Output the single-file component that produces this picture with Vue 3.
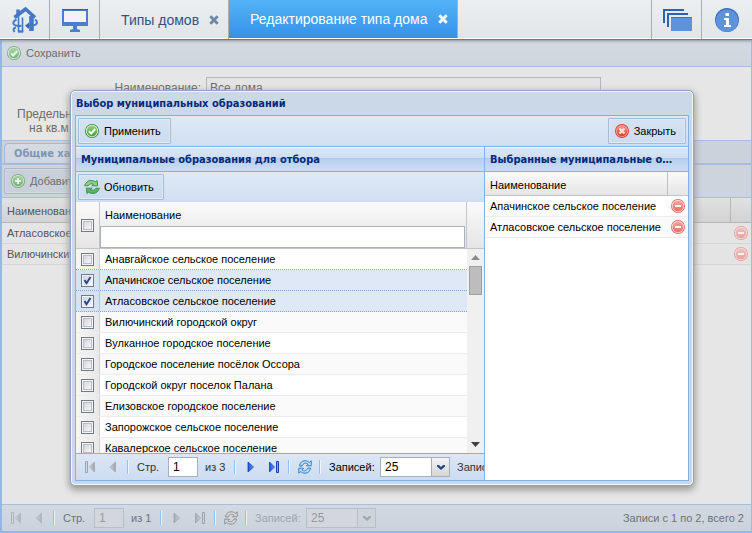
<script setup>
import { ref } from 'vue'

const municipalities = ref([
  { name: 'Анавгайское сельское поселение', checked: false },
  { name: 'Апачинское сельское поселение', checked: true },
  { name: 'Атласовское сельское поселение', checked: true },
  { name: 'Вилючинский городской округ', checked: false },
  { name: 'Вулканное городское поселение', checked: false },
  { name: 'Городское поселение посёлок Оссора', checked: false },
  { name: 'Городской округ поселок Палана', checked: false },
  { name: 'Елизовское городское поселение', checked: false },
  { name: 'Запорожское сельское поселение', checked: false },
  { name: 'Кавалерское сельское поселение', checked: false },
])
const selected = ['Апачинское сельское поселение', 'Атласовское сельское поселение']
const pageRows = ['Атласовское сельское поселение', 'Вилючинский городской округ']
</script>

<template>
  <div class="app">
    <svg class="defs" aria-hidden="true">
      <defs>
        <linearGradient id="gGreen" x1="0" y1="0" x2="0" y2="1"><stop offset="0" stop-color="#8fd07c" /><stop offset="1" stop-color="#3da233" /></linearGradient>
        <linearGradient id="gRed" x1="0" y1="0" x2="0" y2="1"><stop offset="0" stop-color="#f59a8b" /><stop offset="1" stop-color="#dd3a2b" /></linearGradient>
        <linearGradient id="gPink" x1="0" y1="0" x2="0" y2="1"><stop offset="0" stop-color="#f6a49e" /><stop offset="1" stop-color="#ea7169" /></linearGradient>
        <linearGradient id="gBlue" x1="0" y1="0" x2="1" y2="0"><stop offset="0" stop-color="#1c50cf" /><stop offset="1" stop-color="#5aa2f8" /></linearGradient>
        <linearGradient id="gGray" x1="0" y1="0" x2="1" y2="0"><stop offset="0" stop-color="#d5d8dc" /><stop offset="1" stop-color="#999ea6" /></linearGradient>
      </defs>
      <symbol id="ok" viewBox="0 0 16 16">
        <circle cx="8" cy="8" r="7" fill="#2f8a2c" /><circle cx="8" cy="8" r="6.2" fill="#d6efcf" /><circle cx="8" cy="8" r="5.2" fill="url(#gGreen)" />
        <path d="M5 8.2l2.200 2.300L11.200 6" fill="none" stroke="#fff" stroke-width="2" />
      </symbol>
      <symbol id="plus" viewBox="0 0 16 16">
        <circle cx="8" cy="8" r="7" fill="#2f8a2c" /><circle cx="8" cy="8" r="6.2" fill="#d6efcf" /><circle cx="8" cy="8" r="5.2" fill="url(#gGreen)" />
        <path d="M8 5v6M5 8h6" fill="none" stroke="#fff" stroke-width="2" />
      </symbol>
      <symbol id="cancel" viewBox="0 0 16 16">
        <circle cx="8" cy="8" r="7" fill="#cf4636" /><circle cx="8" cy="8" r="6.1" fill="#f3a79b" /><circle cx="8" cy="8" r="5.3" fill="url(#gRed)" />
        <path d="M5.500 5.500l5 5M10.500 5.500l-5 5" fill="none" stroke="#fde4e0" stroke-width="2.200" />
      </symbol>
      <symbol id="minus" viewBox="0 0 16 16">
        <circle cx="8" cy="8" r="7" fill="#e0645c" /><circle cx="8" cy="8" r="6.2" fill="#fbd5d2" /><circle cx="8" cy="8" r="5.3" fill="url(#gPink)" />
        <path d="M5 8h6" stroke="#fff" stroke-width="2" />
      </symbol>
      <symbol id="reload" viewBox="0 0 16 16">
        <g stroke="#3b8a45" stroke-width=".9" stroke-linejoin="round">
          <path d="M.6 6.800C1.500 3.500 4 1.500 7 1.500c1.900 0 3.300.5 4.300 1.300l1.800-1.300.6 5.300H7.800l1.600-1.500C7.600 4.300 5.600 4.600 4.200 6.800z" fill="#8fce8e" />
          <path d="M15.400 9.200c-.9 3.300-3.400 5.300-6.400 5.300-1.900 0-3.300-.5-4.300-1.300l-1.800 1.300-.6-5.300h5.900l-1.600 1.500c1.800 1 3.800.7 5.200-1.500z" fill="#5fb469" />
        </g>
      </symbol>
      <symbol id="first" viewBox="0 0 16 16"><path d="M3.500 2.500h2v11h-2z" fill="#d5d8dc" stroke="#9ea5ae" /><path d="M12.500 3v10L7.500 8z" fill="url(#gGray)" stroke="#a4aab3" stroke-width=".8" /></symbol>
      <symbol id="prev" viewBox="0 0 16 16"><path d="M10.500 3v10L5 8z" fill="url(#gGray)" stroke="#a4aab3" stroke-width=".8" /></symbol>
      <symbol id="next" viewBox="0 0 16 16"><path d="M5 3v10L10.500 8z" fill="url(#gBlue)" stroke="#1740b4" stroke-width=".8" /></symbol>
      <symbol id="last" viewBox="0 0 16 16"><path d="M3.500 3v10L8.500 8z" fill="url(#gBlue)" stroke="#1740b4" stroke-width=".8" /><path d="M10.500 2.500h2v11h-2z" fill="#6ca9f4" stroke="#1740b4" /></symbol>
      <symbol id="refresh" viewBox="0 0 16 16">
        <g fill="#bfe2fb" stroke="#2a7fc8" stroke-width="1" stroke-linejoin="round">
          <path d="M2.500 7C2.800 3.800 5 1.800 8 1.800c1.900 0 3.200.6 4.200 1.700l2-1.700v5H9.500l1.600-1.700C9 3.500 6.200 4 5 7z" />
          <path d="M13.500 9c-.3 3.200-2.500 5.200-5.500 5.200-1.900 0-3.200-.6-4.200-1.700l-2 1.700v-5h4.700l-1.600 1.700C7 12.500 9.800 12 11 9z" />
        </g>
      </symbol>
      <symbol id="x" viewBox="0 0 10 10"><path d="M1.300 1.300l7.400 7.400M8.700 1.300L1.300 8.700" stroke="currentColor" stroke-width="2.800" /></symbol>
    </svg>

    <header class="topbar">
      <button class="tile" aria-label="Главная">
        <svg width="28" height="28" viewBox="0 0 28 28">
          <g fill="none" stroke="#4577c4">
            <path d="M3.500 11.500L14.500 3 24 11.500" stroke-width="3.600" />
            <path d="M7 3.500v5" stroke-width="3.400" />
            <path d="M7.500 10v15.500M11.500 11.500V26" stroke-width="1.600" />
            <path d="M7 25.500h5.300" stroke-width="2.400" />
            <path d="M20.500 10v15" stroke-width="4.600" />
            <path d="M5.500 13.500C2 15 1.500 17.500 3.500 19c1.500 1 4 1 7 .8M3.500 26C1.800 23.500 2.500 21.800 5 21.500" stroke-width="2" />
            <path d="M24 13.500c2.500 1.500 2.500 4 .5 5.200-2 1-4.500 1-8.500.8" stroke-width="2" />
          </g>
          <path d="M18 16.500v6.500l-4-3.200z" fill="#3566b0" />
        </svg>
      </button>
      <button class="tile" aria-label="Рабочий стол">
        <svg width="28" height="28" viewBox="0 0 28 28">
          <path d="M1 3h26v17H1z" fill="#4a7fcb" /><path d="M1 3h26v1H1z" fill="#2f5ea8" />
          <path d="M3 5h22v11H3z" fill="#f0f4f8" />
          <path d="M12 20h4v3l3 1v2H9v-2l3-1z" fill="#4a7fcb" />
        </svg>
      </button>
      <nav class="tabs">
        <a class="tab" href="#types">Типы домов <svg class="close" width="10" height="10"><use href="#x" /></svg></a>
        <a class="tab active" href="#edit">Редактирование типа дома <svg class="close" width="10" height="10"><use href="#x" /></svg></a>
      </nav>
      <button class="tile right" aria-label="Окна">
        <svg width="30" height="24" viewBox="0 0 30 24">
          <path d="M1 15V1h21v2H3v12z" fill="#2c62b6" /><path d="M5 19V5h21v2H7v12z" fill="#2c62b6" /><path d="M9 9h21v14H9z" fill="#5c93da" /><path d="M9 9h21v1H9z" fill="#3f74c2" />
        </svg>
      </button>
      <button class="tile right" aria-label="Информация">
        <svg width="26" height="26" viewBox="0 0 26 26">
          <circle cx="13" cy="13" r="12" fill="#3b6fc0" /><circle cx="13" cy="13.600" r="11.200" fill="#5c93da" />
          <path d="M11.500 6h3.500v3h-3.500zM10 11h5v7h2v2h-7v-2h2v-5h-2z" fill="#fff" />
        </svg>
      </button>
    </header>

    <main class="page">
      <div class="bar save-bar">
        <button class="plain"><svg class="dim" width="16" height="16"><use href="#ok" /></svg>Сохранить</button>
      </div>
      <form class="form" @submit.prevent>
        <label class="form-label" for="house-name">Наименование:</label>
        <input id="house-name" class="form-input" value="Все дома" />
        <label class="form-label wide" for="house-limit">Предельная стоимость<br /><span class="second">на кв.м, руб.:</span></label>
        <input id="house-limit" class="form-input" />
      </form>
      <div class="strip"><button class="strip-tab">Общие характеристики</button></div>
      <div class="bar add-bar">
        <button class="btn muted"><svg class="dim" width="16" height="16"><use href="#plus" /></svg>Добавить</button>
      </div>
      <table class="grid back-grid">
        <thead><tr><th>Наименование</th><th class="act"></th></tr></thead>
        <tbody>
          <tr v-for="row in pageRows" :key="row">
            <td>{{ row }}</td>
            <td class="act"><button class="icon" aria-label="Удалить"><svg width="16" height="16"><use href="#minus" /></svg></button></td>
          </tr>
        </tbody>
      </table>
      <footer class="pager off">
        <button class="icon" aria-label="Первая"><svg width="16" height="16"><use href="#first" /></svg></button>
        <button class="icon" aria-label="Предыдущая"><svg width="16" height="16"><use href="#prev" /></svg></button>
        <i class="sep"></i>
        <label class="page-word" for="page-back">Стр.</label>
        <input id="page-back" class="page-no" value="1" />
        <span class="total">из 1</span>
        <i class="sep"></i>
        <button class="icon" aria-label="Следующая"><svg class="gray" width="16" height="16"><use href="#next" /></svg></button>
        <button class="icon" aria-label="Последняя"><svg class="gray" width="16" height="16"><use href="#last" /></svg></button>
        <i class="sep"></i>
        <button class="icon" aria-label="Обновить"><svg class="gray dark" width="16" height="16"><use href="#refresh" /></svg></button>
        <i class="sep"></i>
        <label class="size-word" for="size-back">Записей:</label>
        <span class="combo"><select id="size-back"><option>25</option></select></span>
        <span class="summary">Записи с 1 по 2, всего 2</span>
      </footer>
    </main>

    <div class="overlay">
      <section class="window" role="dialog" aria-labelledby="win-title">
        <h1 id="win-title" class="win-title">Выбор муниципальных образований</h1>
        <div class="win-body">
          <div class="bar win-bar">
            <button class="btn"><svg width="16" height="16"><use href="#ok" /></svg>Применить</button>
            <button class="btn"><svg width="16" height="16"><use href="#cancel" /></svg>Закрыть</button>
          </div>
          <div class="split">
            <section class="panel left">
              <h2 class="panel-title">Муниципальные образования для отбора</h2>
              <div class="bar panel-bar">
                <button class="btn"><svg width="16" height="16"><use href="#reload" /></svg>Обновить</button>
              </div>
              <div class="source-head">
                <span class="head-check"><input type="checkbox" class="check" aria-label="Выбрать все" /></span>
                <span class="head-name"><label for="filter">Наименование</label><input id="filter" class="filter" /></span>
                <span class="head-end"></span>
              </div>
              <div class="scroller">
                <div class="rows">
                  <label v-for="m in municipalities" :key="m.name" class="row" :class="{ on: m.checked }">
                    <span class="row-check"><input v-model="m.checked" type="checkbox" class="check" /></span>
                    <span class="row-name">{{ m.name }}</span>
                  </label>
                </div>
                <div class="track">
                  <svg width="9" height="5" viewBox="0 0 9 5"><path d="M0 5L4.500 0 9 5z" fill="#8b8b8b" /></svg>
                  <i class="thumb"></i>
                  <svg width="9" height="5" viewBox="0 0 9 5"><path d="M0 0h9L4.500 5z" fill="#404040" /></svg>
                </div>
              </div>
              <footer class="pager">
                <button class="icon" aria-label="Первая"><svg width="16" height="16"><use href="#first" /></svg></button>
                <button class="icon" aria-label="Предыдущая"><svg width="16" height="16"><use href="#prev" /></svg></button>
                <i class="sep"></i>
                <label class="page-word" for="page-win">Стр.</label>
                <input id="page-win" class="page-no" value="1" />
                <span class="total">из 3</span>
                <i class="sep"></i>
                <button class="icon" aria-label="Следующая"><svg width="16" height="16"><use href="#next" /></svg></button>
                <button class="icon" aria-label="Последняя"><svg width="16" height="16"><use href="#last" /></svg></button>
                <i class="sep"></i>
                <button class="icon" aria-label="Обновить"><svg width="16" height="16"><use href="#refresh" /></svg></button>
                <i class="sep"></i>
                <label class="size-word" for="size-win">Записей:</label>
                <span class="combo"><select id="size-win"><option>25</option></select></span>
                <span class="summary">Записи с 1 по 25</span>
              </footer>
            </section>
            <section class="panel right-panel">
              <h2 class="panel-title">Выбранные муниципальные образования</h2>
              <table class="grid">
                <thead><tr><th>Наименование</th><th class="act"></th></tr></thead>
                <tbody>
                  <tr v-for="s in selected" :key="s">
                    <td>{{ s }}</td>
                    <td class="act"><button class="icon" aria-label="Удалить"><svg width="16" height="16"><use href="#minus" /></svg></button></td>
                  </tr>
                </tbody>
              </table>
            </section>
          </div>
        </div>
      </section>
    </div>
  </div>
</template>

<style>
body { margin: 0; overflow: hidden; }
</style>

<style scoped>
* { box-sizing: border-box; }
.app {
  position: relative;
  display: flex;
  flex-direction: column;
  height: 100vh;
  font: 11px/14px "Liberation Sans", Arial, sans-serif;
  color: #000;
}
.defs { position: absolute; width: 0; height: 0; }
button, input, select { font: inherit; color: inherit; margin: 0; border-radius: 0; }
button { background: none; border: 0; padding: 0; }
svg { display: block; flex: none; }

.topbar {
  position: relative;
  z-index: 1;
  display: flex;
  flex: none;
  height: 40px;
  padding-right: 1px;
  background: linear-gradient(#eceff1, #e1e5e8);
  border-bottom: 1px solid #557eb0;
  box-shadow: inset 0 -1px #fff, 0 1px 3px #8a8f98;
}
.tile { display: grid; place-items: center; width: 50px; border-right: 1px solid #aaadb2; }
.tile.right { border-right: 0; border-left: 1px solid #aaadb2; }
.tabs { display: flex; flex: 1; }
.tab {
  display: flex;
  align-items: center;
  gap: 10px;
  padding: 0 9px 0 21px;
  border-right: 1px solid #aaadb2;
  font-size: 14px;
  color: #33527f;
  text-decoration: none;
}
.tab .close { color: #6d87a5; }
.tab.active {
  color: #fff;
  margin-bottom: 1px;
  background: linear-gradient(#52b3f8, #3a96ea 85%, #3a8de0);
}
.tab.active .close { color: #fff; }

.page {
  display: flex;
  flex: 1;
  flex-direction: column;
  min-height: 0;
  padding-left: 2px;
  background: #e6e6e6;
  border-right: 1px solid #9fbbe0;
  border-bottom: 2px solid #94b7e6;
  box-shadow: inset 2px 0 #94b7e6;
  color: #6c6c6c;
}
.bar { display: flex; flex: none; align-items: center; }
.save-bar { height: 27px; padding-left: 4px; background: linear-gradient(#d5dae2, #cfd5de); border-bottom: 1px solid #a9bddd; }
.plain { display: flex; align-items: center; gap: 4px; }
.dim { opacity: .6; }
.form {
  display: grid;
  flex: none;
  grid-template-columns: 199px 395px;
  grid-template-rows: 22px 28px;
  gap: 8px 5px;
  height: 73px;
  padding-top: 10px;
  font-size: 12px;
}
.form-label { align-self: center; text-align: right; }
.form-label.wide { padding-left: 15px; text-align: left; }
.second { padding-left: 12px; }
.form-input { height: 22px; padding: 0 3px; background: #e3e4e3; border: 1px solid #b3b6bc; }
.strip { flex: none; height: 25px; padding: 2px 2px 0; background: #cbd2dc; border-top: 1px solid #a9bddd; border-bottom: 2px solid #a9bddd; }
.strip-tab {
  height: 21px;
  padding: 0 9px;
  background: linear-gradient(#d5dbe3, #cfd6e0);
  border: 1px solid #a3b9db;
  border-radius: 4px 4px 0 0;
  font-family: "DejaVu Sans Condensed", "Noto Sans", sans-serif;
  font-weight: bold;
  color: #8094b3;
}
.add-bar { height: 32px; padding-left: 2px; background: #cdd4dd; }
.btn {
  display: flex;
  align-items: center;
  gap: 4px;
  height: 26px;
  padding: 0 9px 0 5px;
  background: linear-gradient(#d5e2f0, #ccdcef);
  border: 1px solid #a3bbd8;
  border-radius: 1px;
  box-shadow: inset 0 0 0 1px #dfe9f4;
}
.btn.muted { background: #c9d0da; border-color: #adb7c5; box-shadow: inset 0 0 0 1px #d3d9e1; }

.grid { width: 100%; border-collapse: separate; border-spacing: 0; table-layout: fixed; }
.grid th {
  height: 24px;
  padding: 2px 0 0 5px;
  font-weight: normal;
  text-align: left;
  background: linear-gradient(#fafafa, #e5e5e5);
  border-bottom: 1px solid #c5c5c5;
}
.grid th.act, .grid td.act { width: 21px; padding: 0; }
.grid th.act { border-left: 1px solid #c0c0c0; }
.grid td { height: 21px; padding: 0 0 0 5px; white-space: nowrap; border-bottom: 1px solid #ededed; }
.grid tr:nth-child(2) td { background: #fafafa; }
.icon { display: grid; place-items: center; width: 16px; height: 16px; }
.act .icon { margin: 0 auto; width: 20px; }
.grid.back-grid th { height: 25px; background: linear-gradient(#e1e1e1, #d2d2d2); border-color: #b8b8b8; color: #555; }
.back-grid td, .back-grid tr:nth-child(2) td { background: #e4e4e4; border-color: #d5d5d5; color: #555; }
.back-grid .icon { opacity: .55; }
.back-grid { border-top: 1px solid #a9bddd; }

.pager {
  display: flex;
  flex: none;
  align-items: center;
  height: 27px;
  padding-left: 2px;
  overflow: hidden;
  white-space: nowrap;
  background: linear-gradient(#dce7f4, #ccdcf1);
  border-top: 1px solid #86b0e3;
  color: #333;
}
.pager .icon { width: 23px; flex: none; }
.pager .sep { flex: none; width: 2px; height: 14px; margin: 0 8px 0 3px; background: #8fc0f5; border-right: 1px solid #eef5fd; }
.pager .total + .sep { margin: 0 3px 0 0; }
.pager .sep:has(+ .icon) { margin-right: 3px; }
.page-word { flex: none; width: 31px; }
.page-no { flex: none; width: 30px; height: 20px; padding: 0 4px; font-size: 12px; background: #fff; border: 1px solid #a5afbf; color: #000; }
.total { flex: none; width: 29px; margin-left: 7px; }
.size-word { flex: none; width: 51px; color: #000; }
.combo { display: flex; flex: none; position: relative; width: 70px; height: 20px; }
.combo select { appearance: none; width: 100%; padding: 0 4px; font-size: 12px; background: #fff; border: 1px solid #a5afbf; color: #000; }
.combo::after {
  content: "";
  position: absolute;
  top: 1px;
  right: 1px;
  width: 17px;
  height: 18px;
  background: linear-gradient(#f3f3f3, #d6d6d6);
  border-left: 1px solid #a5afbf;
  pointer-events: none;
}
.combo::before {
  content: "";
  position: absolute;
  z-index: 1;
  top: 8px;
  right: 5px;
  width: 8px;
  height: 5px;
  background: #24458f;
  clip-path: polygon(0 0, 25% 0, 50% 40%, 75% 0, 100% 0, 100% 30%, 50% 100%, 0 30%);
  pointer-events: none;
}
.summary { margin-left: 7px; }
.off { margin-top: auto; background: linear-gradient(#d3d9e1, #cad2dc); border-color: #a9bddd; color: #6f7276; }
.off .summary { margin: 0 7px 0 auto; }
.off .icon { opacity: .7; }
.off .size-word { color: #a0a5ad; }
.off .page-no, .off select { background: #d3d7dd; border-color: #b8bfc9; color: #9498a0; }
.off .combo::after { background: #cfd4db; border-color: #b8bfc9; }
.off .combo::before { background: #a0a8b6; }
.gray { filter: grayscale(1) brightness(1.3); opacity: .55; }
.gray.dark { filter: grayscale(1); opacity: 1; }

.overlay { position: absolute; inset: 40px 0 0; z-index: 2; display: flex; padding: 50px 58px 47px 70px; }
.window {
  display: flex;
  flex: 1;
  flex-direction: column;
  min-width: 0;
  padding: 0 4px 4px;
  background: #cbd8e8;
  border: 1px solid #8ea4c1;
  border-radius: 5px;
  box-shadow: inset 0 0 0 1px #f2f6fb, 0 3px 7px 1px #999;
}
.win-title { flex: none; height: 24px; margin: 0; padding: 0 1px; font: bold 11px/25px "DejaVu Sans Condensed", "Noto Sans", sans-serif; color: #04297a; }
.win-body { display: flex; flex: 1; flex-direction: column; min-height: 0; border: 1px solid #86b0e3; }
.win-bar { justify-content: space-between; height: 31px; padding: 0 2px; background: linear-gradient(#dfe9f5, #d0dff0); border-bottom: 1px solid #86b0e3; }
.split { display: flex; flex: 1; min-height: 0; }
.panel { display: flex; flex-direction: column; min-width: 0; background: #fff; }
.left { flex: 1; border-right: 1px solid #86b0e3; }
.right-panel { flex: none; width: 203px; }
.panel-title {
  flex: none;
  height: 25px;
  margin: 0;
  padding: 0 12px 0 5px;
  overflow: hidden;
  text-overflow: ellipsis;
  white-space: nowrap;
  font: bold 11px/24px "DejaVu Sans Condensed", "Noto Sans", sans-serif;
  color: #04297a;
  background: linear-gradient(#dae7f6 0, #cddef3 45%, #abc7ec 45%, #abc7ec 50%, #b8cfee 50%, #cbddf3);
  border-top: 1px solid #f2f7fd;
  border-bottom: 1px solid #86b0e3;
}
.panel-bar { height: 30px; padding-left: 2px; background: linear-gradient(#dfe9f5, #d0dff0); }
.source-head { display: flex; flex: none; height: 47px; background: linear-gradient(#fafafa, #e5e5e5); border-bottom: 1px solid #c5c5c5; }
.head-check { display: grid; place-items: center; width: 24px; border-right: 1px solid #c5c5c5; }
.head-name { display: flex; flex: 1; flex-direction: column; padding-right: 1px; border-right: 1px solid #c5c5c5; }
.head-name label { height: 24px; padding-left: 5px; line-height: 26px; }
.filter { width: 100%; height: 22px; border: 1px solid #a5afc5; background: #fff; }
.head-end { width: 17px; }
.check {
  appearance: none;
  display: block;
  width: 13px;
  height: 13px;
  background: linear-gradient(135deg, #c9ced6, #fff) padding-box;
  border: 1px solid #747a82;
  box-shadow: inset 0 0 0 1px #f4f4f4, inset 0 0 0 2px #b9bec6;
}
.check:checked {
  background: url("data:image/svg+xml,%3Csvg xmlns='http://www.w3.org/2000/svg' viewBox='0 0 11 11'%3E%3Cpath d='M2.500 5l2 3.200L8.500 2' fill='none' stroke='%2328478f' stroke-width='2'/%3E%3C/svg%3E") center / 11px, linear-gradient(135deg, #c9ced6, #fff);
  box-shadow: inset 0 0 0 1px #f4f4f4;
}
.scroller { display: flex; flex: 1 1 0; min-height: 0; overflow: hidden; }
.rows { flex: 1; overflow: hidden; }
.row { display: flex; height: 21px; border-bottom: 1px solid #ededed; }
.row:nth-child(even) { background: #fafafa; }
.row.on { background: #dfe8f6; border-bottom: 1px dotted #7da4e3; }
.row:has(+ .on) { border-bottom: 1px dotted #7da4e3; }
.row-check { display: grid; place-items: center; width: 24px; background: linear-gradient(90deg, #f7f7f7, #e8e8e8); border-right: 1px solid #d0d0d0; }
.row.on .row-check { background: #d5e2f4; border-color: #a9c4ec; }
.row-name { padding-left: 5px; line-height: 20px; }
.track { display: flex; flex-direction: column; align-items: center; width: 17px; padding: 6px 0; background: #f0f0f0; }
.thumb { width: 13px; height: 29px; margin: 6px 0 auto; background: #bdbdbd; border: 1px solid #a0a0a0; }
</style>
